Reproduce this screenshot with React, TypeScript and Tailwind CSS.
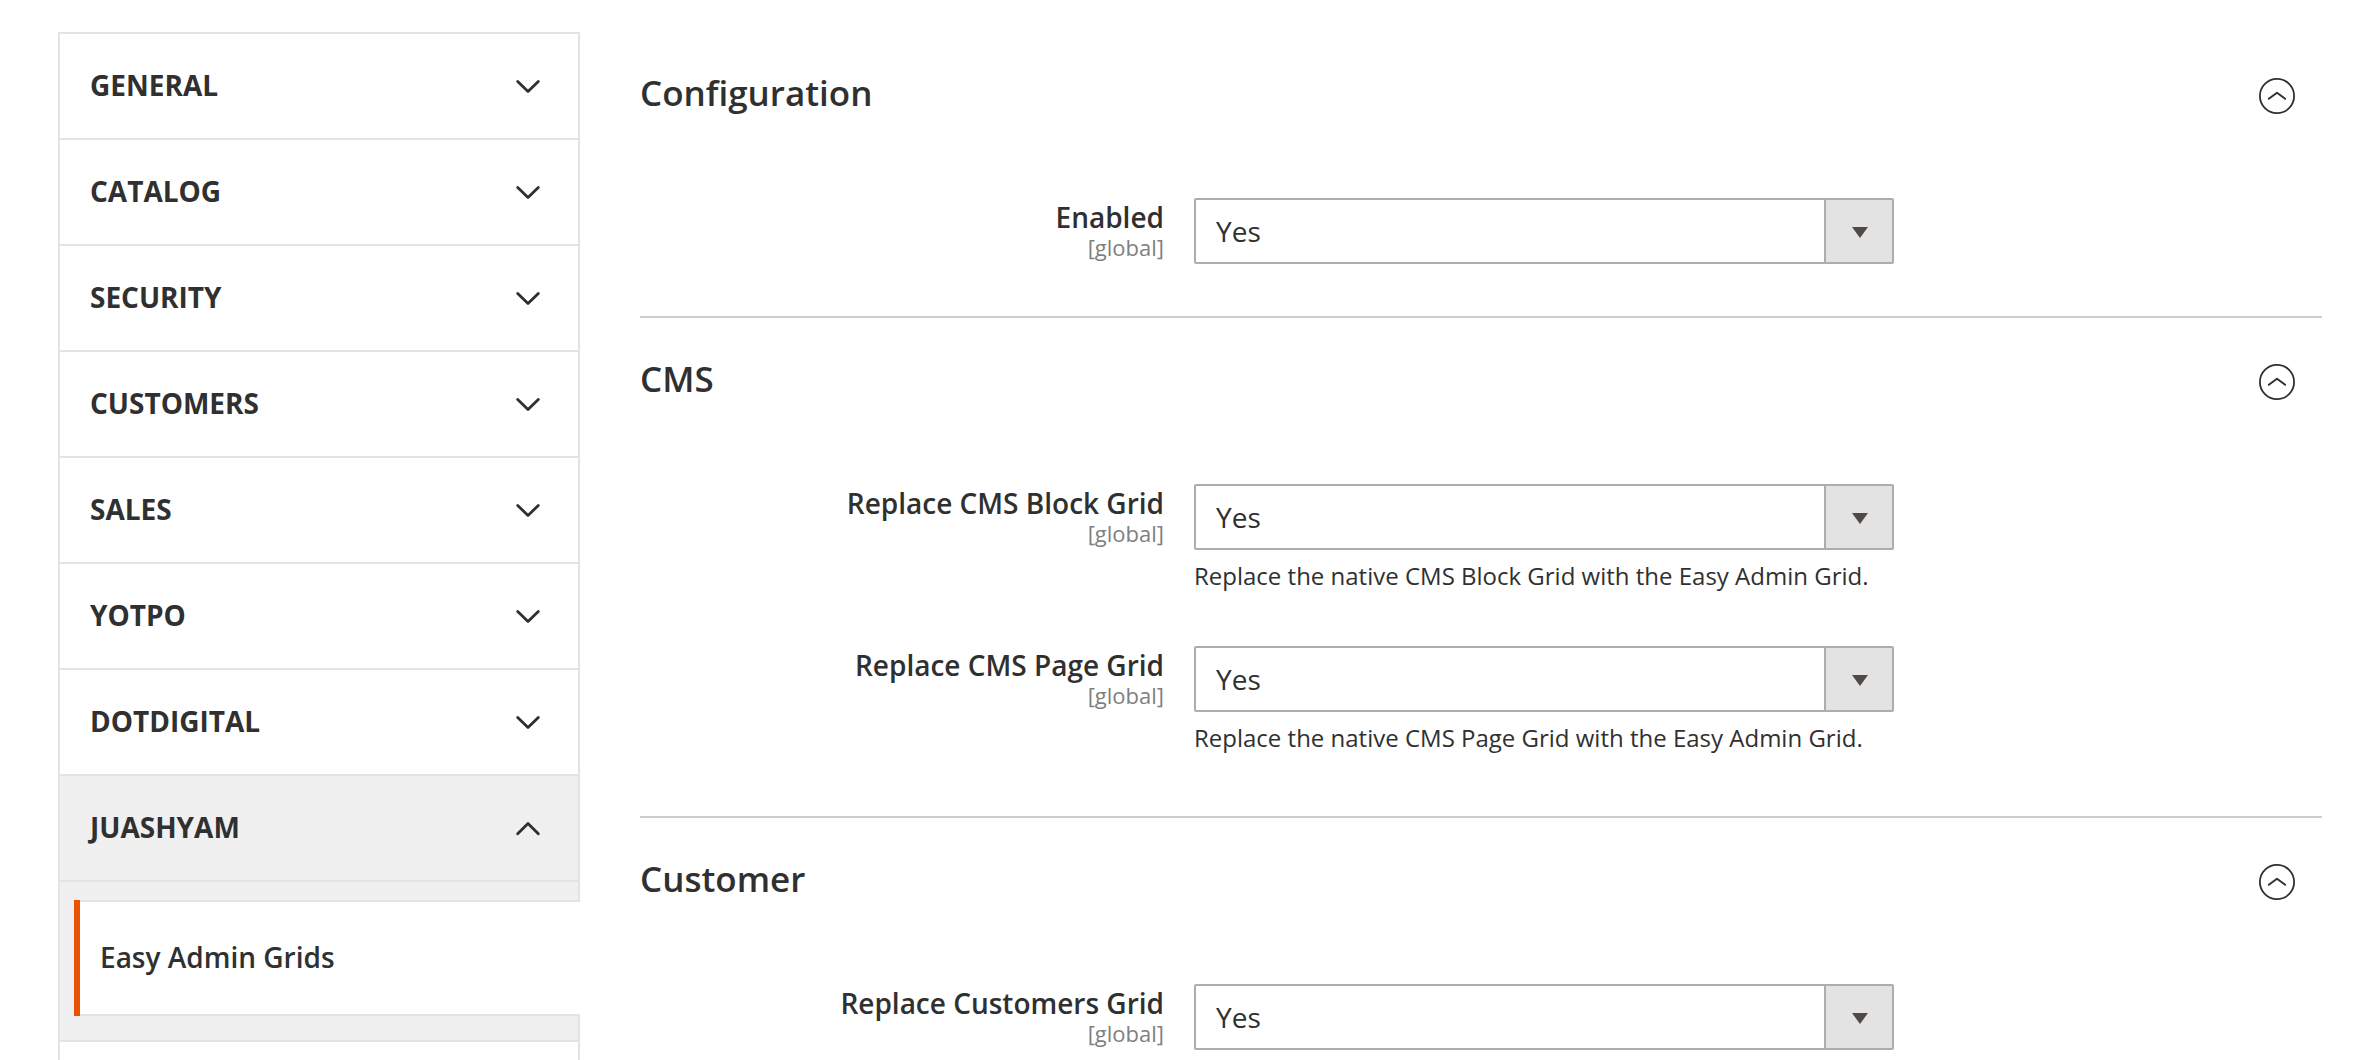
import { useId, useState } from "react";

type Field = { label: string; note?: string };
type Section = { title: string; fields: Field[] };

const groups = ["General", "Catalog", "Security", "Customers", "Sales", "Yotpo", "Dotdigital", "Juashyam"];

const sections: Section[] = [
  { title: "Configuration", fields: [{ label: "Enabled" }] },
  {
    title: "CMS",
    fields: [
      {
        label: "Replace CMS Block Grid",
        note: "Replace the native CMS Block Grid with the Easy Admin Grid.",
      },
      {
        label: "Replace CMS Page Grid",
        note: "Replace the native CMS Page Grid with the Easy Admin Grid.",
      },
    ],
  },
  { title: "Customer", fields: [{ label: "Replace Customers Grid" }] },
];

function Chevron({ up }: { up: boolean }) {
  return (
    <svg
      viewBox="0 0 24 24"
      className="size-6 shrink-0"
      fill="none"
      stroke="currentColor"
      strokeWidth="2.8"
      strokeLinecap="round"
      strokeLinejoin="round"
      aria-hidden="true"
    >
      <path d={up ? "M1.7 18.8 12 8.6 22.3 18.8" : "M1.7 8.4 12 18.6 22.3 8.4"} />
    </svg>
  );
}

function CircleChevron({ up }: { up: boolean }) {
  return (
    <svg
      viewBox="0 0 36 36"
      className="mt-2 size-9 shrink-0"
      fill="none"
      stroke="currentColor"
      strokeLinecap="round"
      strokeLinejoin="round"
      aria-hidden="true"
    >
      <circle cx="18" cy="18" r="17.1" strokeWidth="1.8" />
      <path d={up ? "M9.8 20.8 18 14.8 26.2 20.8" : "M9.8 15.2 18 21.2 26.2 15.2"} strokeWidth="2" />
    </svg>
  );
}

function SideGroup({ name }: { name: string }) {
  const [open, setOpen] = useState(name === "Juashyam");
  return (
    <li className="border-b-2 border-[#e3e3e3]">
      <button
        type="button"
        aria-expanded={open}
        onClick={() => setOpen(!open)}
        className={
          open
            ? "flex w-full items-center justify-between border-b-2 border-[#e3e3e3] bg-[#f0f0f0] pt-8 pr-[38px] pb-[34px] pl-[30px] text-left"
            : "flex w-full items-center justify-between pt-8 pr-[38px] pb-[34px] pl-[30px] text-left"
        }
      >
        <span className="text-[28px] leading-[38px] font-bold uppercase">{name}</span>
        <Chevron up={open} />
      </button>
      {open && name === "Juashyam" && (
        <ul className="bg-[#f0f0f0] pt-[18px] pb-6 pl-[14px]">
          <li className="-mr-0.5 flex bg-white">
            <span className="w-1.5 bg-[#eb5202]" />
            <a
              href="#easy-admin-grids"
              className="grow border-y-2 border-[#e3e3e3] pt-9 pr-5 pb-[38px] pl-5 text-[28px] leading-[38px] font-semibold"
            >
              Easy Admin Grids
            </a>
          </li>
        </ul>
      )}
    </li>
  );
}

function FieldRow({ label, note }: Field) {
  const id = useId();
  return (
    <div className="grid grid-cols-[554fr_700fr_428fr] pt-11">
      <label htmlFor={id} className="pr-[30px] text-right">
        <span className="block text-[28px] leading-[38px] font-semibold">{label}</span>
        <span className="block text-[22px] leading-[22px] text-[#808080]">[global]</span>
      </label>
      <div>
        <div className="relative">
          <select
            id={id}
            defaultValue="Yes"
            className="block w-full appearance-none rounded-[2px] border-2 border-[#adadad] bg-white py-3 pr-[88px] pl-5 text-[28px] leading-[38px]"
          >
            <option>Yes</option>
            <option>No</option>
          </select>
          <span className="pointer-events-none absolute inset-y-0.5 right-0.5 flex w-[68px] items-center justify-center border-l-2 border-[#adadad] bg-[#e3e3e3]">
            <svg viewBox="0 0 18 18" className="size-[18px]" aria-hidden="true">
              <path d="M2 5h16L10 16z" fill="#514943" />
            </svg>
          </span>
        </div>
        {note && <p className="py-2 text-[24px] leading-9">{note}</p>}
      </div>
    </div>
  );
}

function ConfigSection({ title, fields }: Section) {
  const [open, setOpen] = useState(true);
  return (
    <section className="border-b-2 border-[#cccccc]">
      <h2>
        <button
          type="button"
          aria-expanded={open}
          onClick={() => setOpen(!open)}
          className="flex w-full items-start justify-between py-[38px] pr-[27px] text-left"
        >
          <span className="text-[35px] leading-[46px] font-semibold [font-variant-ligatures:none]">{title}</span>
          <CircleChevron up={open} />
        </button>
      </h2>
      {open && (
        <div className="pb-[52px]">
          {fields.map((field) => (
            <FieldRow key={field.label} {...field} />
          ))}
        </div>
      )}
    </section>
  );
}

export default function App() {
  return (
    <div className="grid h-screen grid-cols-[522fr_1682fr] gap-[60px] overflow-hidden bg-white px-[58px] pt-8 font-['Open_Sans',sans-serif] text-[#303030]">
      <nav aria-label="Configuration groups" className="border-x-2 border-t-2 border-[#e3e3e3]">
        <ul>
          {groups.map((name) => (
            <SideGroup key={name} name={name} />
          ))}
        </ul>
      </nav>
      <main>
        {sections.map((section) => (
          <ConfigSection key={section.title} {...section} />
        ))}
      </main>
    </div>
  );
}
